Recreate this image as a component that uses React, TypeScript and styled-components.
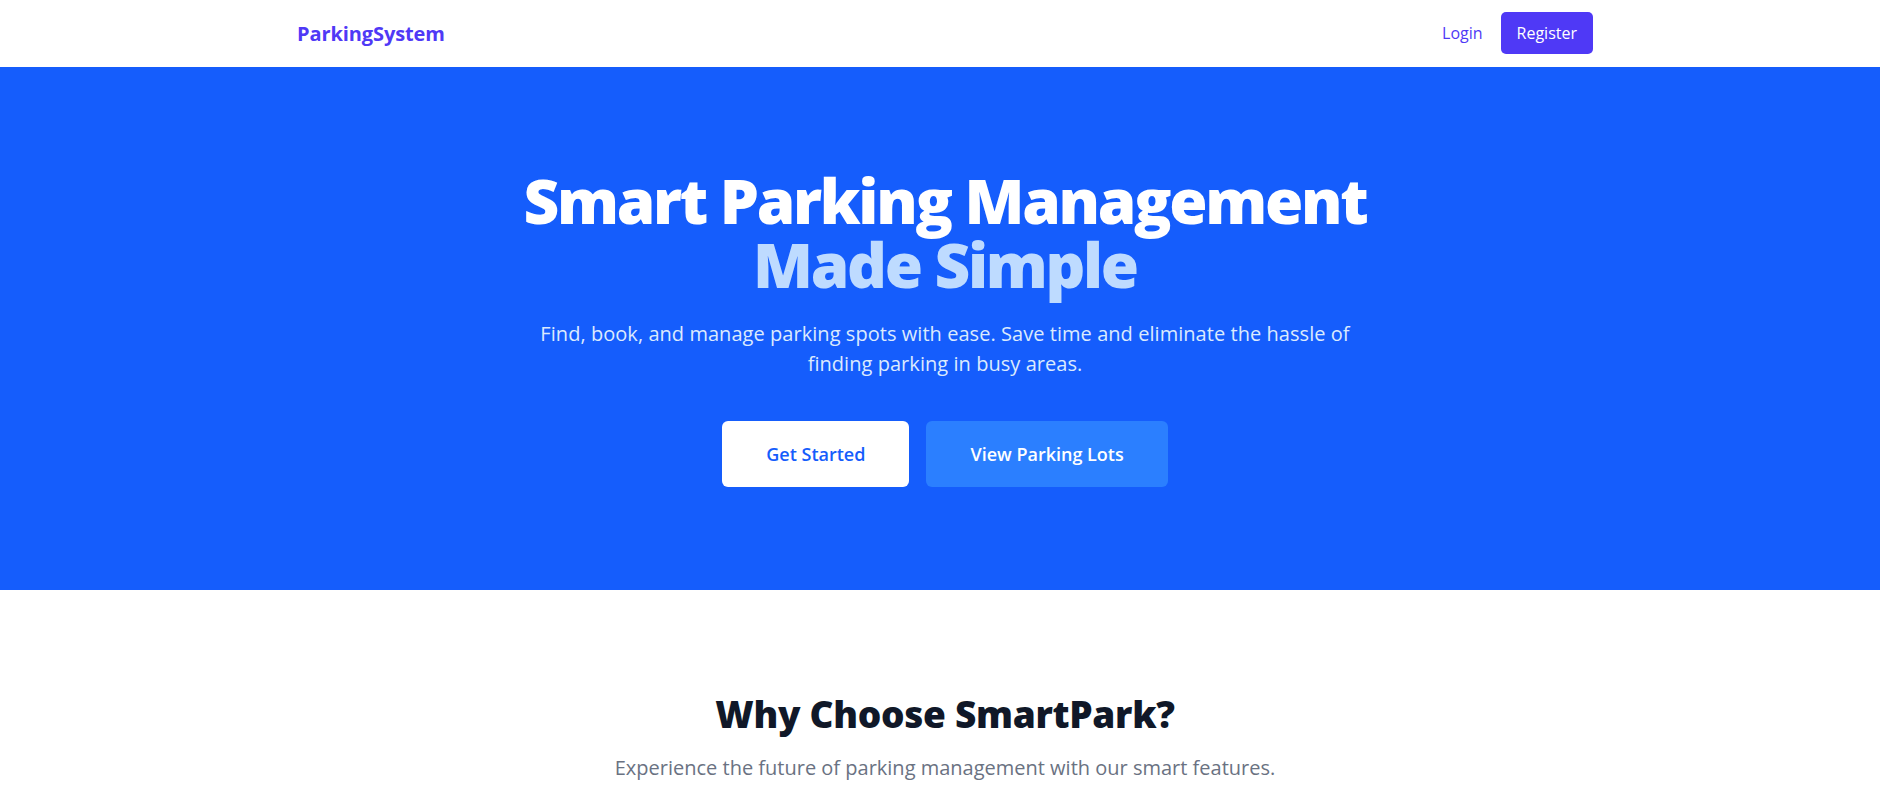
import React from "react";
import styled, { createGlobalStyle } from "styled-components";

const FONT = `"Segoe UI", "Open Sans", "Noto Sans", sans-serif`;

const Global = createGlobalStyle`
  html, body {
    margin: 0;
    padding: 0;
    background: #ffffff;
    font-family: ${FONT};
    -webkit-font-smoothing: antialiased;
  }
  * { box-sizing: border-box; }
`;

const Page = styled.div`
  min-height: 802px;
  background: #ffffff;
`;

const Container = styled.div`
  max-width: 1306px;
  margin: 0 auto;
  padding-left: 10px;
`;

const NavBar = styled.nav`
  background: #ffffff;
  padding-bottom: 1px;
`;

const NavInner = styled(Container)`
  height: 66px;
  display: flex;
  align-items: center;
  justify-content: space-between;
`;

const Logo = styled.a`
  font-size: 20px;
  font-weight: 700;
  color: #4f39f6;
  text-decoration: none;
  letter-spacing: -0.1px;
`;

const NavActions = styled.div`
  display: flex;
  align-items: center;
  gap: 18px;
`;

const NavLink = styled.a`
  font-size: 16px;
  color: #4f39f6;
  text-decoration: none;
`;

const NavButton = styled.a`
  display: inline-flex;
  align-items: center;
  justify-content: center;
  height: 42px;
  padding: 0 16px;
  border-radius: 5px;
  background: #4f39f6;
  color: #ffffff;
  font-size: 16px;
  text-decoration: none;
`;

const Hero = styled.section`
  background: #155dfc;
  padding: 101px 0 103px;
`;

const HeroInner = styled(Container)`
  display: flex;
  flex-direction: column;
  align-items: center;
  text-align: center;
`;

const HeroTitle = styled.h1`
  margin: 0;
  font-size: 62px;
  line-height: 64px;
  font-weight: 800;
  color: #ffffff;
  letter-spacing: -2.3px;
`;

const TitleLine = styled.span<{ $accent?: boolean }>`
  display: block;
  color: ${(p) => (p.$accent ? "#bedbff" : "#ffffff")};
`;

const HeroText = styled.p`
  margin: 23px 0 0;
  max-width: 850px;
  font-size: 20px;
  line-height: 30px;
  color: #dbeafe;
  letter-spacing: 0.05px;
`;

const ButtonRow = styled.div`
  margin-top: 42px;
  display: flex;
  gap: 17px;
`;

const HeroButton = styled.a<{ $variant: "light" | "soft" }>`
  display: inline-flex;
  align-items: center;
  justify-content: center;
  height: 66px;
  padding: 0 44px;
  border-radius: 6px;
  font-size: 18px;
  font-weight: 600;
  text-decoration: none;
  background: ${(p) => (p.$variant === "light" ? "#ffffff" : "#2b7fff")};
  color: ${(p) => (p.$variant === "light" ? "#155dfc" : "#ffffff")};
`;

const Features = styled.section`
  padding: 104px 0 40px;
`;

const FeaturesInner = styled(Container)`
  text-align: center;
`;

const SectionTitle = styled.h2`
  margin: 0;
  font-size: 37px;
  line-height: 40px;
  font-weight: 800;
  color: #101828;
  letter-spacing: -0.3px;
`;

const SectionText = styled.p`
  margin: 20px 0 0;
  font-size: 20px;
  line-height: 28px;
  color: #6a7282;
`;

export default function App() {
  return (
    <Page>
      <Global />
      <NavBar>
        <NavInner>
          <Logo href="#">ParkingSystem</Logo>
          <NavActions>
            <NavLink href="#">Login</NavLink>
            <NavButton href="#">Register</NavButton>
          </NavActions>
        </NavInner>
      </NavBar>
      <Hero>
        <HeroInner>
          <HeroTitle>
            <TitleLine>Smart Parking Management</TitleLine>
            <TitleLine $accent>Made Simple</TitleLine>
          </HeroTitle>
          <HeroText>
            Find, book, and manage parking spots with ease. Save time and
            eliminate the hassle of finding parking in busy areas.
          </HeroText>
          <ButtonRow>
            <HeroButton href="#" $variant="light">
              Get Started
            </HeroButton>
            <HeroButton href="#" $variant="soft">
              View Parking Lots
            </HeroButton>
          </ButtonRow>
        </HeroInner>
      </Hero>
      <Features>
        <FeaturesInner>
          <SectionTitle>Why Choose SmartPark?</SectionTitle>
          <SectionText>
            Experience the future of parking management with our smart features.
          </SectionText>
        </FeaturesInner>
      </Features>
    </Page>
  );
}
